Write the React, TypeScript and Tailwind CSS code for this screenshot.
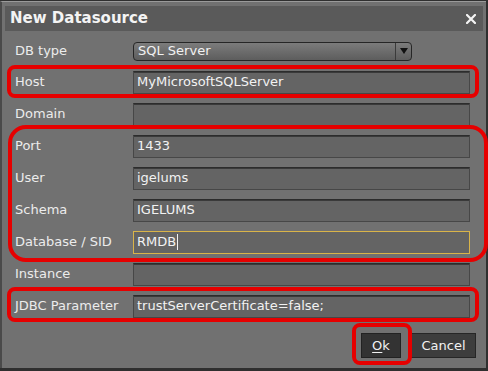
import React from 'react';

type Field = { label: string; value?: string; focused?: boolean };

const fields: Field[] = [
  { label: 'Host', value: 'MyMicrosoftSQLServer' },
  { label: 'Domain' },
  { label: 'Port', value: '1433' },
  { label: 'User', value: 'igelums' },
  { label: 'Schema', value: 'IGELUMS' },
  { label: 'Database / SID', value: 'RMDB', focused: true },
  { label: 'Instance' },
  { label: 'JDBC Parameter', value: 'trustServerCertificate=false;' },
];

const TextField: React.FC<{ field: Field }> = ({ field }) => (
  <div
    className={
      'flex h-[23px] w-[337px] items-center bg-[#646464] px-[3px] text-[13px] text-[#f2f2f2] ' +
      (field.focused
        ? 'border border-[#d9b449]'
        : 'border border-[#474747] border-t-[#2c2c2c] shadow-[inset_0_1px_0_#3a3a3a]')
    }
  >
    <span>{field.value}</span>
    {field.focused && <span className="ml-[1px] h-[16px] w-[1px] bg-[#f2f2f2]" />}
  </div>
);

const App: React.FC = () => {
  return (
    <div
      className="relative h-[371px] w-[488px] overflow-hidden bg-[#2f2f2f] pt-[1px] pr-[2px] pb-[3px]"
      style={{ fontFamily: '"DejaVu Sans", Verdana, sans-serif' }}
    >
      {/* Dialog */}
      <div className="flex h-full flex-col border-t border-l-2 border-[#9a9a9a] border-l-[#4a4a4a] bg-[#717171]">
        {/* Title bar */}
        <div className="mx-[3px] mt-[4px] flex h-[25px] items-center justify-between bg-[#5a5a5a] pl-[5px] pr-[7px]">
          <span className="text-[15px] font-bold text-[#f4f4f4]">New Datasource</span>
          <svg width="10" height="10" viewBox="0 0 10 10">
            <path d="M1 1 L9 9 M9 1 L1 9" stroke="#f4f4f4" strokeWidth="2.2" strokeLinecap="square" />
          </svg>
        </div>

        {/* Form */}
        <div className="flex flex-col pl-[13px] pt-[5px]">
          <div className="flex h-[30px] items-center">
            <span className="w-[118px] text-[13px] text-[#ececec]">DB type</span>
            <div className="flex h-[19px] w-[279px] items-center rounded-[4px] border border-[#262626] bg-gradient-to-b from-[#7c7c7c] to-[#5d5d5d]">
              <span className="flex-1 pl-[4px] text-[13px] text-[#f2f2f2]">SQL Server</span>
              <div className="flex h-full w-[16px] items-center justify-center border-l border-[#3a3a3a]">
                <svg width="8" height="6" viewBox="0 0 8 6">
                  <path d="M0 0 L8 0 L4 6 Z" fill="#111" />
                </svg>
              </div>
            </div>
          </div>

          {fields.map((f) => (
            <div key={f.label} className="flex h-[32px] items-center">
              <span className="w-[118px] text-[13px] text-[#ececec]">{f.label}</span>
              <TextField field={f} />
            </div>
          ))}

          {/* Buttons */}
          <div className="mt-[11px] flex justify-end gap-[10px] pr-[10px]">
            <button className="h-[25px] w-[40px] border border-[#222] bg-[#333333] text-[13px] text-[#f2f2f2]">
              <span className="underline underline-offset-2">O</span>k
            </button>
            <button className="h-[25px] w-[65px] border border-[#262626] bg-[#3d3d3d] text-[13px] text-[#f2f2f2]">
              Cancel
            </button>
          </div>
        </div>
      </div>

      {/* Red annotation outlines */}
      <div className="pointer-events-none absolute left-[7px] top-[65px] h-[33px] w-[472px] rounded-[8px] border-4 border-[#e60000]" />
      <div className="pointer-events-none absolute left-[8px] top-[125px] h-[137px] w-[480px] rounded-[18px] border-4 border-[#e60000]" />
      <div className="pointer-events-none absolute left-[7px] top-[287px] h-[35px] w-[472px] rounded-[8px] border-4 border-[#e60000]" />
      <div className="pointer-events-none absolute left-[352px] top-[323px] h-[42px] w-[60px] rounded-[8px] border-4 border-[#e60000]" />
    </div>
  );
};

export default App;
